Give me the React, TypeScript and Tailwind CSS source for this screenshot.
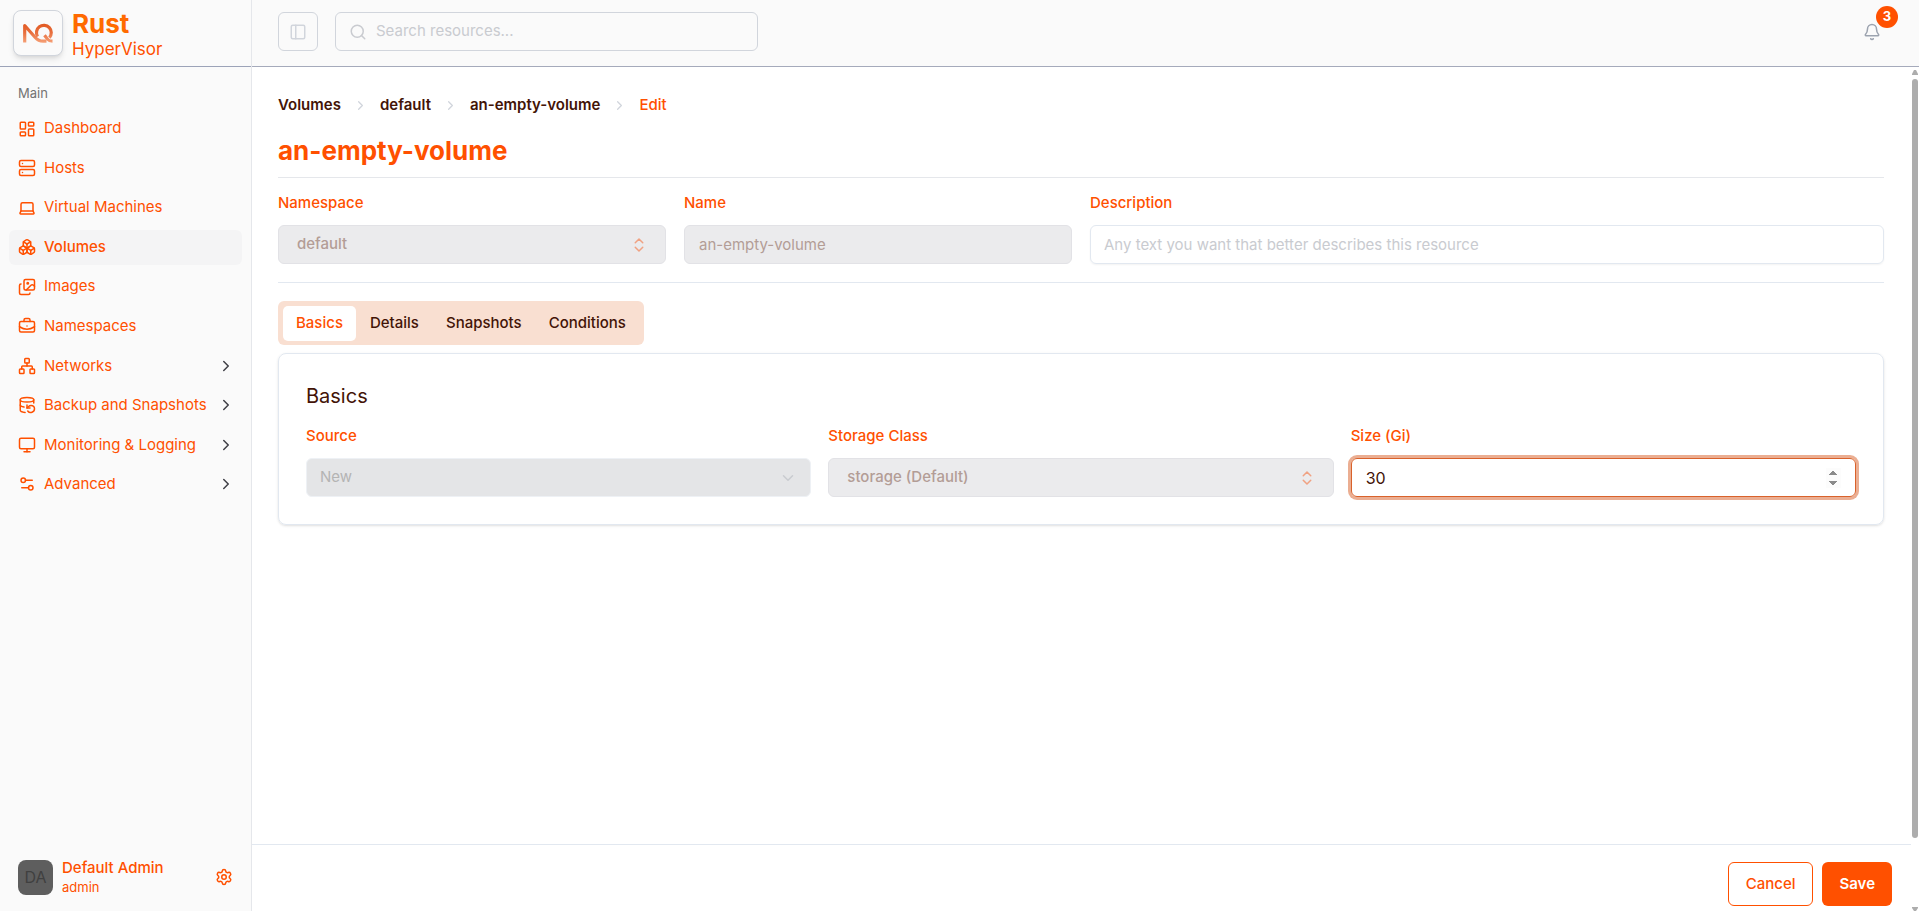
import React, { useState } from 'react';
import {
  Bell,
  Boxes,
  BriefcaseBusiness,
  ChevronDown,
  ChevronRight,
  ChevronsUpDown,
  DatabaseBackup,
  Images,
  Laptop,
  LayoutDashboard,
  LucideIcon,
  Monitor,
  Network,
  PanelLeft,
  Search,
  Server,
  Settings,
  Settings2,
} from 'lucide-react';

interface NavItem {
  label: string;
  icon: LucideIcon;
  active?: boolean;
  expandable?: boolean;
}

const navItems: NavItem[] = [
  { label: 'Dashboard', icon: LayoutDashboard },
  { label: 'Hosts', icon: Server },
  { label: 'Virtual Machines', icon: Laptop },
  { label: 'Volumes', icon: Boxes, active: true },
  { label: 'Images', icon: Images },
  { label: 'Namespaces', icon: BriefcaseBusiness },
  { label: 'Networks', icon: Network, expandable: true },
  { label: 'Backup and Snapshots', icon: DatabaseBackup, expandable: true },
  { label: 'Monitoring & Logging', icon: Monitor, expandable: true },
  { label: 'Advanced', icon: Settings2, expandable: true },
];

const tabs = ['Basics', 'Details', 'Snapshots', 'Conditions'];

const LogoMark = () => (
  <svg width="32" height="22" viewBox="0 0 32 22" fill="none" stroke="url(#logo-fade)" strokeWidth="3.2" aria-hidden="true">
    <defs>
      <linearGradient id="logo-fade" x1="0" y1="0" x2="0" y2="22" gradientUnits="userSpaceOnUse">
        <stop offset="0" stopColor="#e0551c" />
        <stop offset="0.5" stopColor="#e8703f" />
        <stop offset="1" stopColor="#f8a77e" />
      </linearGradient>
    </defs>
    <path d="M2.7 20.5V3.5L13 15.2c2.5 2.9 5 4 8 4h3.5" strokeLinejoin="round" />
    <path d="M15.6 14.6a7.4 7.4 0 1 1 11.8 1" />
    <path d="M22.5 13.2l3.2 4.2c1 1.3 2 1.8 4.8 1.8" />
  </svg>
);

const Sidebar: React.FC = () => (
  <aside className="flex w-[252px] shrink-0 flex-col border-r border-gray-200 bg-[#fafafa]">
    <div className="flex h-[67px] shrink-0 items-center gap-[9px] border-b border-[#9ca3b8] pl-[13px]">
      <div className="flex h-[46px] w-[50px] items-center justify-center rounded-lg border border-gray-300 bg-[#fafafa] shadow-md">
        <LogoMark />
      </div>
      <div className="pt-[3px]">
        <p className="text-[26px] leading-[28px] font-bold text-[#ff6a00]">Rust</p>
        <p className="text-[17px] leading-[22px]">HyperVisor</p>
      </div>
    </div>
    <nav className="flex grow flex-col px-[9px] pt-[9px]">
      <h2 className="px-[9px] text-[13px] leading-[35px] text-[#737373]">Main</h2>
      <ul className="flex h-[391px] flex-col justify-between">
        {navItems.map(({ label, icon: Icon, active, expandable }) => (
          <li key={label}>
            <a
              href="#"
              className={`flex h-[35px] items-center gap-[8px] rounded-md pr-[7px] pl-[9px] text-[15px] ${active ? 'bg-[#f4f4f5] font-medium' : ''}`}
            >
              <Icon size={18} className="shrink-0" />
              <span className="grow whitespace-nowrap">{label}</span>
              {expandable && <ChevronRight size={18} className="shrink-0 text-[#3f3f46]" />}
            </a>
          </li>
        ))}
      </ul>
    </nav>
    <div className="flex items-center gap-[9px] px-[18px] pb-[15px]">
      <div className="flex size-[35px] items-center justify-center rounded-lg bg-[#5e5e5e] text-base text-[#404040]">DA</div>
      <div className="grow">
        <p className="text-[15px] leading-[20px] font-medium">Default Admin</p>
        <p className="text-[13px] leading-[18px]">admin</p>
      </div>
      <button type="button" aria-label="Settings">
        <Settings size={18} />
      </button>
    </div>
  </aside>
);

const TopBar: React.FC = () => (
  <header className="flex h-[67px] shrink-0 items-start justify-between border-b border-[#a5aabb] bg-[#fafafa] px-[26px] pt-[12px]">
    <div className="flex gap-[17px]">
      <button
        type="button"
        aria-label="Toggle sidebar"
        className="flex h-[39px] w-[40px] items-center justify-center rounded-md border border-gray-300 text-gray-300"
      >
        <PanelLeft size={18} strokeWidth={2} />
      </button>
      <label className="flex h-[39px] w-[423px] items-center gap-[9px] rounded-md border border-gray-300 px-[13px] text-[#c9cbd0]">
        <Search size={18} strokeWidth={2} />
        <input
          type="search"
          aria-label="Search resources"
          placeholder="Search resources..."
          className="grow bg-transparent text-[15px] outline-none placeholder:text-[#c9cbd0]"
        />
      </label>
    </div>
    <button type="button" aria-label="Notifications" className="relative mt-[11px] mr-[12px] text-[#9ca3af]">
      <Bell size={18} strokeWidth={2} />
      <span className="absolute -top-[17px] left-[13px] flex size-[22px] items-center justify-center rounded-full bg-[#ff5000] text-[13px] font-bold text-white">
        3
      </span>
    </button>
  </header>
);

const Breadcrumb: React.FC = () => (
  <nav aria-label="Breadcrumb">
    <ol className="flex items-center gap-[12px] text-[15px] leading-[22px] font-semibold text-[#431407]">
      {['Volumes', 'default', 'an-empty-volume'].map((crumb) => (
        <li key={crumb} className="flex items-center gap-[12px]">
          <a href="#">{crumb}</a>
          <ChevronRight size={15} strokeWidth={2} className="text-gray-300" />
        </li>
      ))}
      <li className="font-medium text-[#ff5000]">Edit</li>
    </ol>
  </nav>
);

interface FieldProps {
  id: string;
  label: string;
  className?: string;
  children: React.ReactNode;
}

const Field: React.FC<FieldProps> = ({ id, label, className = '', children }) => (
  <div className={className}>
    <label htmlFor={id} className="mb-[11px] block text-[15px] leading-[22px] font-medium">
      {label}
    </label>
    {children}
  </div>
);

const LockedSelect: React.FC<{ id: string; value: string }> = ({ id, value }) => (
  <div className="relative">
    <select
      id={id}
      disabled
      className="h-[39px] w-full appearance-none rounded-md border border-[#e2e2e6] bg-[#ebebed] px-[18px] text-[15px] font-medium text-[#b39d96] opacity-100"
    >
      <option>{value}</option>
    </select>
    <ChevronsUpDown size={18} strokeWidth={2} className="absolute top-[11px] right-[18px] text-[#f0a283]" />
  </div>
);

const BasicsPanel: React.FC = () => {
  const [size, setSize] = useState('30');

  return (
    <section className="mt-[8px] rounded-lg border border-[#e2e8f0] p-[27px] pt-[29px] shadow-sm">
      <h2 className="text-[20px] leading-[26px] text-[#431407]">Basics</h2>
      <div className="mt-[16px] grid grid-cols-3 gap-[17px]">
        <Field id="source" label="Source">
          <div className="relative">
            <select
              id="source"
              disabled
              className="h-[39px] w-full appearance-none rounded-md border border-[#eef1f5] bg-[#e4e5e7] px-[13px] text-[15px] text-[#b4b4b4] opacity-100"
            >
              <option>New</option>
            </select>
            <ChevronDown size={18} strokeWidth={2} className="absolute top-[11px] right-[14px] text-[#c9cbd0]" />
          </div>
        </Field>
        <Field id="storage-class" label="Storage Class">
          <LockedSelect id="storage-class" value="storage (Default)" />
        </Field>
        <Field id="size" label="Size (Gi)">
          <input
            id="size"
            type="number"
            value={size}
            onChange={(e) => setSize(e.target.value)}
            className="h-[39px] w-full rounded-md border border-[#d9622b] px-[14px] text-base text-[#431407] ring-3 ring-[#ebae92] outline-none [&::-webkit-inner-spin-button]:opacity-100"
          />
        </Field>
      </div>
    </section>
  );
};

const Scrollbar = () => (
  <div aria-hidden="true" className="flex w-[8px] shrink-0 flex-col items-center pt-[3px]">
    <svg width="6" height="5" viewBox="0 0 6 5" fill="#adadad"><path d="M2 0h2l2 4v1H0V4z" /></svg>
    <div className="mt-[4px] mb-[69px] w-[6px] grow rounded-full bg-[#adadad]" />
    <svg width="6" height="4" viewBox="0 0 6 4" fill="#adadad"><path d="M0 0h6v1L4 4H2L0 1z" /></svg>
  </div>
);

const App: React.FC = () => {
  const [tab, setTab] = useState('Basics');

  return (
    <div className="flex h-screen overflow-hidden bg-white font-['Inter',sans-serif] text-[#ff5000]">
      <Sidebar />
      <div className="flex min-w-0 grow flex-col">
        <TopBar />
        <div className="flex min-h-0 grow">
          <div className="flex min-w-0 grow flex-col">
            <main className="grow pt-[27px] pr-[27px] pl-[26px]">
              <Breadcrumb />
              <h1 className="mt-[17px] border-b border-gray-200 pb-[9px] text-[26px] leading-[35px] font-bold">an-empty-volume</h1>
              <div className="mt-[14px] grid grid-cols-4 gap-[18px] border-b border-[#e2e8f0] pb-[18px]">
                <Field id="namespace" label="Namespace">
                  <LockedSelect id="namespace" value="default" />
                </Field>
                <Field id="name" label="Name">
                  <input
                    id="name"
                    type="text"
                    disabled
                    defaultValue="an-empty-volume"
                    className="h-[39px] w-full rounded-md border border-[#e2e2e6] bg-[#ebebed] px-[14px] text-[15px] text-[#b39d96]"
                  />
                </Field>
                <Field id="description" label="Description" className="col-span-2">
                  <input
                    id="description"
                    type="text"
                    placeholder="Any text you want that better describes this resource"
                    className="h-[39px] w-full rounded-md border border-[#e2e8f0] px-[13px] text-[15px] shadow-xs placeholder:text-[#c9cbd0]"
                  />
                </Field>
              </div>
              <div role="tablist" className="mt-[18px] flex h-[44px] w-fit items-center gap-px rounded-md bg-[#f9dfd1] px-[5px]">
                {tabs.map((name) => (
                  <button
                    key={name}
                    type="button"
                    role="tab"
                    aria-selected={tab === name}
                    onClick={() => setTab(name)}
                    className={`h-[35px] rounded-[5px] px-[13px] text-[15px] font-medium ${tab === name ? 'bg-white' : 'text-[#431407]'}`}
                  >
                    {name}
                  </button>
                ))}
              </div>
              <BasicsPanel />
            </main>
            <footer className="flex shrink-0 justify-end gap-[9px] border-t border-[#e2e8f0] pt-[17px] pr-[19px] pb-[5px]">
              <button type="button" className="h-[44px] rounded-md border border-[#ff5000] px-[17px] text-[15px] font-medium">
                Cancel
              </button>
              <button type="button" className="h-[44px] rounded-md bg-[#ff5000] px-[17px] text-[15px] font-semibold text-white">
                Save
              </button>
            </footer>
          </div>
          <Scrollbar />
        </div>
      </div>
    </div>
  );
};

export default App;
